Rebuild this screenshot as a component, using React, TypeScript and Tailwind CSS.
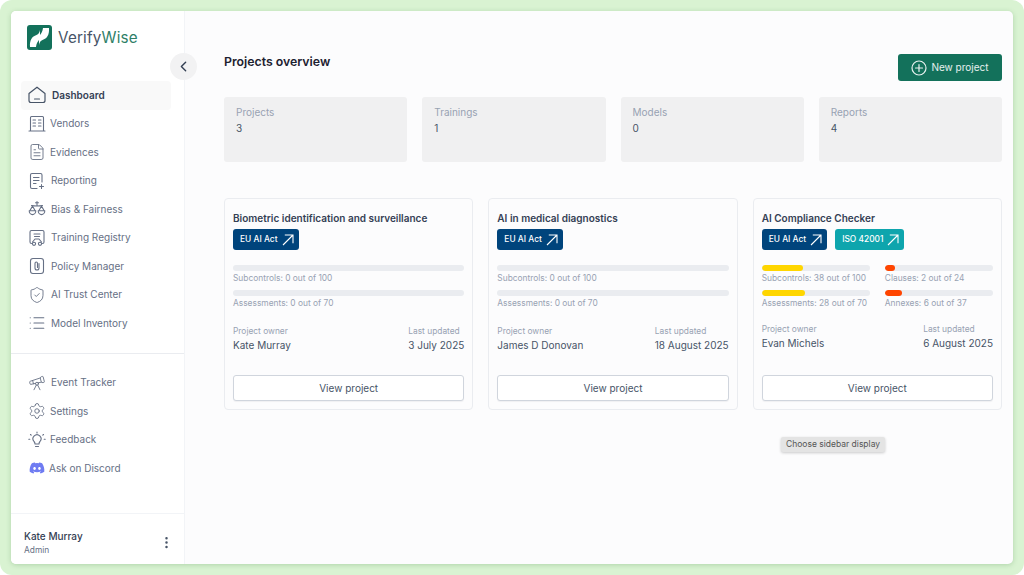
import { ChevronLeft, FileText, ShieldCheck, List, Telescope, Settings, MoreVertical } from 'lucide-react';
import { FaDiscord } from 'react-icons/fa';
import type { ReactNode } from 'react';

const iconClass = 'h-[18px] w-[18px] text-[#667085]';

function Svg({ children }: { children: ReactNode }) {
  return (
    <svg viewBox="0 0 18 18" fill="none" stroke="currentColor" strokeWidth="1.1" strokeLinecap="round" strokeLinejoin="round" className={iconClass}>
      {children}
    </svg>
  );
}

const HomeIcon = () => (
  <svg viewBox="0 0 18 18" fill="none" stroke="#475467" strokeWidth="1.2" strokeLinejoin="round" strokeLinecap="round" className="h-[18px] w-[18px]">
    <path d="M1 7.5 L9 1.2 L17 7.5 V14.5 Q17 16.5 15 16.5 H3 Q1 16.5 1 14.5 Z" />
    <path d="M6.5 13 H11.5" />
  </svg>
);

const VendorIcon = () => (
  <Svg>
    <path d="M2.5 16 V2.5 Q2.5 1.5 3.5 1.5 H14.5 Q15.5 1.5 15.5 2.5 V16 M1 16 H17" />
    <path d="M5 5 H7.5 M10.5 5 H13 M5 8 H7.5 M10.5 8 H13 M5 11 H7.5 M10.5 11 H13" />
  </Svg>
);

const ReportIcon = () => (
  <Svg>
    <path d="M9 16.5 H4 Q2.5 16.5 2.5 15 V3 Q2.5 1.5 4 1.5 H12.5 Q14 1.5 14 3 V10" />
    <path d="M5.5 5.5 H11 M5.5 8.5 H11 M5.5 11.5 H8" />
    <path d="M13.5 12.5 V16.5 M11.5 14.5 H15.5" />
  </Svg>
);

const BiasIcon = () => (
  <Svg>
    <path d="M9 1.5 V6 M3.5 5.5 Q9 6.5 14.5 5.5 M7.5 2.8 H10.5" />
    <path d="M4.5 6 L2 10.5 M4.5 6 L7 10.5 M13.5 6 L11 10.5 M13.5 6 L16 10.5" />
    <path d="M1.2 10.8 H7.8 A3.3 3.8 0 0 1 1.2 10.8 Z" />
    <path d="M10.2 10.8 H16.8 A3.3 3.8 0 0 1 10.2 10.8 Z" />
  </Svg>
);

const TrainingIcon = () => (
  <Svg>
    <path d="M3.5 14.5 Q2 14.5 2 13 V3 Q2 1.5 3.5 1.5 H14.5 Q16 1.5 16 3 V13 Q16 14.5 14.5 14.5" />
    <path d="M6 5 H12 M6.5 7.5 H11.5" />
    <path d="M4.5 13 L7 10 H11 L13.5 13" />
    <circle cx="6" cy="14.8" r="1.6" />
    <circle cx="12" cy="14.8" r="1.6" />
  </Svg>
);

const PolicyIcon = () => (
  <Svg>
    <rect x="2.5" y="1.5" width="13" height="15" rx="2.5" />
    <path d="M11 6.5 V11 Q11 13 9 13 Q7 13 7 11 V6.5 Q7 5 8.3 5 Q9.5 5 9.5 6.5 V10.5" />
  </Svg>
);

const BulbIcon = () => (
  <Svg>
    <path d="M7 13 Q7 11.5 6 10.5 A4 4 0 1 1 12 10.5 Q11 11.5 11 13 Z" />
    <path d="M7.5 15.5 H10.5 M9 1 V2 M2.5 3.5 L3.2 4.2 M15.5 3.5 L14.8 4.2 M.8 8.2 H1.8 M16.2 8.2 H17.2" />
  </Svg>
);

const ArrowIcon = () => (
  <svg viewBox="0 0 12 12" fill="none" stroke="currentColor" strokeWidth="1.1" className="h-[12px] w-[12px]">
    <path d="M1 11 L11 1 M2.8 1 H11 V9.2" />
  </svg>
);

const LucideWrap = ({ children }: { children: ReactNode }) => <span className="text-[#667085]">{children}</span>;

const mainNav = [
  { label: 'Dashboard', icon: <HomeIcon />, active: true, gap: 'gap-[6px]' },
  { label: 'Vendors', icon: <VendorIcon />, gap: 'gap-[4px]' },
  { label: 'Evidences', icon: <LucideWrap><FileText className="h-[18px] w-[18px]" strokeWidth={1.2} /></LucideWrap>, gap: 'gap-[4px]' },
  { label: 'Reporting', icon: <ReportIcon />, gap: 'gap-[5px]' },
  { label: 'Bias & Fairness', icon: <BiasIcon />, gap: 'gap-[5px]' },
  { label: 'Training Registry', icon: <TrainingIcon />, gap: 'gap-[5px]' },
  { label: 'Policy Manager', icon: <PolicyIcon />, gap: 'gap-[5px]' },
  { label: 'AI Trust Center', icon: <LucideWrap><ShieldCheck className="h-[18px] w-[18px]" strokeWidth={1.2} /></LucideWrap>, gap: 'gap-[5px]' },
  { label: 'Model Inventory', icon: <LucideWrap><List className="h-[18px] w-[18px]" strokeWidth={1.6} /></LucideWrap>, gap: 'gap-[5px]' },
];

const bottomNav = [
  { label: 'Event Tracker', icon: <LucideWrap><Telescope className="h-[18px] w-[18px]" strokeWidth={1.2} /></LucideWrap>, gap: 'gap-[5px]' },
  { label: 'Settings', icon: <LucideWrap><Settings className="h-[18px] w-[18px]" strokeWidth={1.2} /></LucideWrap>, gap: 'gap-[4px]' },
  { label: 'Feedback', icon: <BulbIcon />, gap: 'gap-[4px]' },
  { label: 'Ask on Discord', icon: <FaDiscord className="h-[16px] w-[16px] text-[#6f7cf2]" />, gap: 'gap-[3px]' },
];

function NavItem({ label, icon, active, gap }: { label: string; icon: ReactNode; active?: boolean; gap: string }) {
  return (
    <div className={`flex h-[28.5px] w-[150px] items-center ${gap} rounded-[4px] pl-[7px] text-[10px] ${active ? 'bg-[#f9f9f9] font-semibold text-[#344054]' : 'text-[#667085]'}`}>
      <span className="flex h-[18px] w-[18px] items-center justify-center">{icon}</span>
      <span>{label}</span>
    </div>
  );
}

const stats = [
  { label: 'Projects', value: '3' },
  { label: 'Trainings', value: '1' },
  { label: 'Models', value: '0' },
  { label: 'Reports', value: '4' },
];

function Tag({ label, color }: { label: string; color: string }) {
  return (
    <div className={`flex h-[21px] items-center gap-[4px] rounded-[3px] pr-[5px] pl-[7px] text-[8.4px] font-medium whitespace-nowrap text-white ${color}`}>
      {label}
      <ArrowIcon />
    </div>
  );
}

function Bar({ label, pct, color }: { label: string; pct: number; color: string }) {
  return (
    <div>
      <div className="h-[6px] overflow-hidden rounded-full bg-[#eaecf0]">
        {pct > 0 && <div className={`h-full rounded-full ${color}`} style={{ width: `${pct}%` }} />}
      </div>
      <div className="mt-[1px] h-[13px] text-[8.4px] leading-[13px] whitespace-nowrap text-[#98a2b3]">{label}</div>
    </div>
  );
}

type Project = {
  title: string;
  owner: string;
  updated: string;
  tags: { label: string; color: string }[];
  bars: { label: string; pct: number; color: string }[];
  extra?: { label: string; pct: number; color: string }[];
};

const euTag = { label: 'EU AI Act', color: 'bg-[#00447c]' };

const projects: Project[] = [
  {
    title: 'Biometric identification and surveillance',
    owner: 'Kate Murray',
    updated: '3 July 2025',
    tags: [euTag],
    bars: [
      { label: 'Subcontrols: 0 out of 100', pct: 0, color: '' },
      { label: 'Assessments: 0 out of 70', pct: 0, color: '' },
    ],
  },
  {
    title: 'AI in medical diagnostics',
    owner: 'James D Donovan',
    updated: '18 August 2025',
    tags: [euTag],
    bars: [
      { label: 'Subcontrols: 0 out of 100', pct: 0, color: '' },
      { label: 'Assessments: 0 out of 70', pct: 0, color: '' },
    ],
  },
  {
    title: 'AI Compliance Checker',
    owner: 'Evan Michels',
    updated: '6 August 2025',
    tags: [euTag, { label: 'ISO 42001', color: 'bg-[#0ea5ad]' }],
    bars: [
      { label: 'Subcontrols: 38 out of 100', pct: 38, color: 'bg-[#ffd600]' },
      { label: 'Assessments: 28 out of 70', pct: 40, color: 'bg-[#ffd600]' },
    ],
    extra: [
      { label: 'Clauses: 2 out of 24', pct: 9, color: 'bg-[#ff4500]' },
      { label: 'Annexes: 6 out of 37', pct: 16, color: 'bg-[#ff4500]' },
    ],
  },
];

function ProjectCard({ project }: { project: Project }) {
  const { title, owner, updated, tags, bars, extra } = project;
  return (
    <div className="flex h-[212px] flex-col rounded-[4px] border border-[#eaecf0] bg-[#fcfcfd] px-[8px] pt-[12px]">
      <div className="text-[10px] leading-[14px] font-semibold text-[#344054]">{title}</div>
      <div className="mt-[4px] flex gap-[8px]">
        {tags.map((t) => (
          <Tag key={t.label} {...t} />
        ))}
      </div>
      {extra ? (
        <div className="mt-[15px] grid grid-cols-2 gap-x-[15px] gap-y-[5px]">
          <Bar {...bars[0]} />
          <Bar {...extra[0]} />
          <Bar {...bars[1]} />
          <Bar {...extra[1]} />
        </div>
      ) : (
        <div className="mt-[15px] flex flex-col gap-[5px]">
          {bars.map((b) => (
            <Bar key={b.label} {...b} />
          ))}
        </div>
      )}
      <div className={`flex justify-between ${extra ? 'mt-[13px]' : 'mt-[15px]'}`}>
        <div>
          <div className="text-[8.4px] leading-[13px] text-[#98a2b3]">Project owner</div>
          <div className="text-[10px] leading-[15px] text-[#475467]">{owner}</div>
        </div>
        <div>
          <div className="text-[8.4px] leading-[13px] text-[#98a2b3]">Last updated</div>
          <div className="text-[10px] leading-[15px] text-[#475467]">{updated}</div>
        </div>
      </div>
      <div className="mt-auto mb-[8px] flex h-[26px] items-center justify-center rounded-[3px] border border-[#d0d5dd] bg-white text-[10px] text-[#475467] shadow-[0_1px_1px_rgba(16,24,40,0.05)]">
        View project
      </div>
    </div>
  );
}

export default function App() {
  return (
    <div className="h-[575px] w-[1024px] overflow-hidden bg-white font-['Inter',sans-serif]">
      <div className="h-full w-full rounded-[12px] bg-[#d9f3d2] p-[11px]">
        <div className="relative flex h-[553px] w-[1002px] overflow-hidden rounded-[5px] bg-[#fcfcfd] shadow-[0_1px_5px_rgba(80,140,80,0.3)]">
          <aside className="flex w-[174px] shrink-0 flex-col border-r border-[#f2f4f7] bg-white">
            <div className="flex items-center gap-[6px] pt-[14px] pl-[16px]">
              <svg viewBox="0 0 25 25" className="h-[25px] w-[25px]">
                <rect width="25" height="25" rx="3" fill="#13715b" />
                <path d="M3 22 C2.5 15 5 11.5 9.5 10 C11.5 9.3 12.5 7.5 13 5 L13 12.5 C12.5 16 10 15.5 9 22 Z" fill="#fff" />
                <path d="M22 3 C22.5 10 20 13.5 15.5 15 C13.5 15.7 12.5 17.5 12 20 L12 12.5 C12.5 9 15 9.5 16 3 Z" fill="#fff" />
              </svg>
              <div className="text-[15.2px] leading-[25px] tracking-[0.2px] text-[#475467]">
                Verify<span className="text-[#2f7f68]">Wise</span>
              </div>
            </div>
            <nav className="mt-[31px] flex flex-col pl-[10px]">
              {mainNav.map((n) => (
                <NavItem key={n.label} {...n} />
              ))}
            </nav>
            <div className="mt-[15px] h-px bg-[#eaecf0]" />
            <nav className="mt-[15px] flex flex-col pl-[10px]">
              {bottomNav.map((n) => (
                <NavItem key={n.label} {...n} />
              ))}
            </nav>
            <div className="mt-auto flex h-[51px] items-center justify-between border-t border-[#f2f4f7] pt-[7px] pr-[10px] pl-[13px]">
              <div>
                <div className="text-[10px] leading-[14px] font-medium text-[#344054]">Kate Murray</div>
                <div className="mt-[1px] text-[8.4px] leading-[12px] text-[#667085]">Admin</div>
              </div>
              <MoreVertical className="h-[15px] w-[15px] text-[#475467]" strokeWidth={2} />
            </div>
          </aside>

          <div className="absolute top-[42px] left-[159px] flex h-[27px] w-[27px] items-center justify-center rounded-full bg-[#f2f2f3]">
            <ChevronLeft className="h-[17px] w-[17px] text-[#344054]" strokeWidth={2} />
          </div>

          <main className="flex-1 pt-[43px] pr-[11px] pl-[39px]">
            <div className="flex items-start justify-between">
              <h1 className="text-[12.3px] leading-[15px] font-semibold text-[#1c2130]">Projects overview</h1>
              <div className="flex h-[27px] w-[104px] items-center justify-center gap-[4px] rounded-[3px] bg-[#13715b] text-[10px] text-white/90">
                <svg viewBox="0 0 16 16" fill="none" stroke="currentColor" strokeWidth="1.2" strokeLinecap="round" className="h-[16px] w-[16px]">
                  <circle cx="8" cy="8" r="7" />
                  <path d="M8 4.5 V11.5 M4.5 8 H11.5" />
                </svg>
                New project
              </div>
            </div>
            <div className="mt-[16px] grid grid-cols-4 gap-[15px]">
              {stats.map((s) => (
                <div key={s.label} className="h-[65px] rounded-[3px] bg-[#f0f0f1] px-[12px] pt-[7px] text-[10px] leading-[16px]">
                  <div className="text-[#98a2b3]">{s.label}</div>
                  <div className="text-[#475467]">{s.value}</div>
                </div>
              ))}
            </div>
            <div className="mt-[36px] grid grid-cols-3 gap-[15px]">
              {projects.map((p) => (
                <ProjectCard key={p.title} project={p} />
              ))}
            </div>
          </main>

          <div className="absolute top-[426px] left-[770px] rounded-[2px] bg-[#e4e4e4] px-[5px] py-[1px] text-[8.5px] leading-[13px] text-[#555] shadow-[0_1px_3px_rgba(0,0,0,0.2)]">
            Choose sidebar display
          </div>
        </div>
      </div>
    </div>
  );
}
